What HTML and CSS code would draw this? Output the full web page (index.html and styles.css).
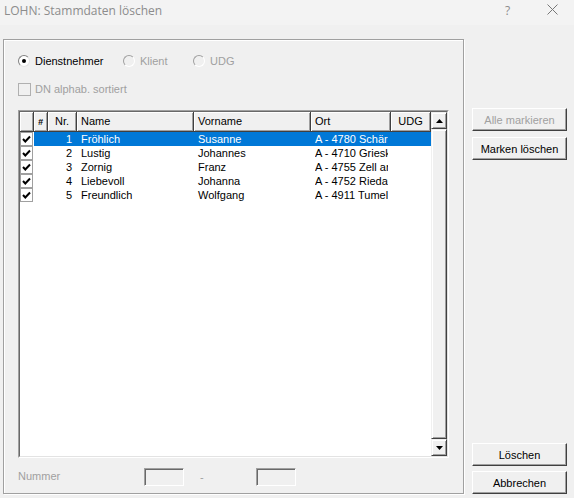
FILE: index.html
```html
<!DOCTYPE html>
<html lang="de">
<head>
    <meta charset="UTF-8">
    <title>LOHN: Stammdaten löschen</title>
    <link rel="stylesheet" href="styles.css">
</head>
<body>
    <div class="titlebar">
        <span class="title">LOHN: Stammdaten löschen</span>
        <span class="help">?</span>
        <span class="close">
            <svg width="11" height="11" viewBox="0 0 11 11"><path d="M0.5 0.5 L10.5 10.5 M10.5 0.5 L0.5 10.5" stroke="#777" stroke-width="1" fill="none"/></svg>
        </span>
    </div>

    <div class="dialog">
        <div class="group">
            <div class="radios">
                <label class="radio"><span class="radio-dot on"></span>Dienstnehmer</label>
                <label class="radio off"><span class="radio-dot"></span>Klient</label>
                <label class="radio off"><span class="radio-dot"></span>UDG</label>
            </div>

            <div class="check-row off">
                <span class="box"></span>DN alphab. sortiert
            </div>

            <div class="list">
                <div class="list-inner">
                    <div class="grid">
                        <div class="head">
                            <div class="hcell c-chk"></div>
                            <div class="hcell c-mark center"><span class="mark">#</span></div>
                            <div class="hcell c-nr center">Nr.</div>
                            <div class="hcell c-name">Name</div>
                            <div class="hcell c-vor">Vorname</div>
                            <div class="hcell c-ort">Ort</div>
                            <div class="hcell c-udg center">UDG</div>
                        </div>
                        <div class="rows">
                            <div class="row selected">
                                <div class="cell c-chk"><span class="tick"><svg width="11" height="11" viewBox="0 0 11 11"><polyline points="2,5 4.3,7.5 9,2.5" stroke="#000" stroke-width="2" fill="none"/></svg></span></div>
                                <div class="cell c-mark"></div>
                                <div class="cell c-nr num">1</div>
                                <div class="cell c-name">Fröhlich</div>
                                <div class="cell c-vor">Susanne</div>
                                <div class="cell c-ort"><span>A - 4780 Schärding</span></div>
                                <div class="cell c-udg"></div>
                            </div>
                            <div class="row">
                                <div class="cell c-chk"><span class="tick"><svg width="11" height="11" viewBox="0 0 11 11"><polyline points="2,5 4.3,7.5 9,2.5" stroke="#000" stroke-width="2" fill="none"/></svg></span></div>
                                <div class="cell c-mark"></div>
                                <div class="cell c-nr num">2</div>
                                <div class="cell c-name">Lustig</div>
                                <div class="cell c-vor">Johannes</div>
                                <div class="cell c-ort"><span>A - 4710 Grieskirchen</span></div>
                                <div class="cell c-udg"></div>
                            </div>
                            <div class="row">
                                <div class="cell c-chk"><span class="tick"><svg width="11" height="11" viewBox="0 0 11 11"><polyline points="2,5 4.3,7.5 9,2.5" stroke="#000" stroke-width="2" fill="none"/></svg></span></div>
                                <div class="cell c-mark"></div>
                                <div class="cell c-nr num">3</div>
                                <div class="cell c-name">Zornig</div>
                                <div class="cell c-vor">Franz</div>
                                <div class="cell c-ort"><span>A - 4755 Zell an der Pram</span></div>
                                <div class="cell c-udg"></div>
                            </div>
                            <div class="row">
                                <div class="cell c-chk"><span class="tick"><svg width="11" height="11" viewBox="0 0 11 11"><polyline points="2,5 4.3,7.5 9,2.5" stroke="#000" stroke-width="2" fill="none"/></svg></span></div>
                                <div class="cell c-mark"></div>
                                <div class="cell c-nr num">4</div>
                                <div class="cell c-name">Liebevoll</div>
                                <div class="cell c-vor">Johanna</div>
                                <div class="cell c-ort"><span>A - 4752 Riedau</span></div>
                                <div class="cell c-udg"></div>
                            </div>
                            <div class="row">
                                <div class="cell c-chk"><span class="tick"><svg width="11" height="11" viewBox="0 0 11 11"><polyline points="2,5 4.3,7.5 9,2.5" stroke="#000" stroke-width="2" fill="none"/></svg></span></div>
                                <div class="cell c-mark"></div>
                                <div class="cell c-nr num">5</div>
                                <div class="cell c-name">Freundlich</div>
                                <div class="cell c-vor">Wolfgang</div>
                                <div class="cell c-ort"><span>A - 4911 Tumeltsham</span></div>
                                <div class="cell c-udg"></div>
                            </div>
                        </div>
                    </div>
                    <div class="scrollbar">
                        <div class="sb-btn"><svg width="7" height="4" viewBox="0 0 7 4"><polygon points="0,4 7,4 3.5,0" fill="#000"/></svg></div>
                        <div class="sb-thumb"></div>
                        <div class="sb-btn"><svg width="7" height="4" viewBox="0 0 7 4"><polygon points="0,0 7,0 3.5,4" fill="#000"/></svg></div>
                    </div>
                </div>
            </div>

            <div class="range off">
                <span class="range-label">Nummer</span>
                <span class="edit"></span>
                <span class="dash">-</span>
                <span class="edit"></span>
            </div>
        </div>

        <div class="buttons">
            <div class="btn-group top">
                <button class="btn" disabled>Alle markieren</button>
                <button class="btn">Marken löschen</button>
            </div>
            <div class="btn-group bottom">
                <button class="btn">Löschen</button>
                <button class="btn">Abbrechen</button>
            </div>
        </div>
    </div>
</body>
</html>
```

FILE: styles.css
```css
body {
    margin: 0;
    padding: 0;
    width: 574px;
    height: 498px;
    overflow: hidden;
    background-color: #f0f0f0;
    font-family: 'Liberation Sans', Arial, sans-serif;
    font-size: 11px;
    color: #000;
}

.titlebar {
    height: 25px;
    background-color: #f3f3f3;
    display: flex;
    align-items: center;
    font-family: 'Open Sans', 'Noto Sans', sans-serif;
    font-size: 12px;
    color: #8c8c8c;
}

.title {
    padding-left: 4px;
    margin-top: -4px;
    flex: 1;
}

.help {
    margin-top: -4px;
    width: 14px;
    margin-right: 28px;
    font-size: 12px;
}

.close {
    display: flex;
    margin-top: -6px;
    margin-right: 16px;
}

.dialog {
    display: flex;
    padding-top: 14px;
    padding-left: 3px;
}

.group {
    width: 461px;
    height: 455px;
    box-sizing: border-box;
    border: 1px solid #a0a0a0;
    box-shadow: inset 1px 1px 0 #fff, 1px 1px 0 #fff;
    padding-left: 14px;
}

.off {
    color: #a0a0a0;
}

.radios {
    display: flex;
    height: 14px;
    line-height: 14px;
    margin-top: 14px;
}

.radio {
    display: flex;
    align-items: center;
    gap: 5px;
}

.radio:nth-child(1) {
    width: 105px;
}

.radio:nth-child(2) {
    width: 70px;
}

.radio-dot {
    width: 10px;
    height: 10px;
    border-radius: 50%;
    border: 1px solid;
    border-color: #a0a0a0 #fff #fff #a0a0a0;
    background-color: #f0f0f0;
    position: relative;
}

.radio-dot.on {
    background-color: #fff;
    border-color: #808080 #e3e3e3 #e3e3e3 #808080;
}

.radio-dot.on::after {
    content: "";
    position: absolute;
    left: 3px;
    top: 3px;
    width: 4px;
    height: 4px;
    border-radius: 50%;
    background-color: #000;
}

.check-row {
    display: flex;
    align-items: center;
    gap: 4px;
    height: 14px;
    margin-top: 14px;
}

.box {
    width: 11px;
    height: 11px;
    border: 1px solid #b0b0b0;
    background-color: #f0f0f0;
}

.list {
    margin-top: 14px;
    width: 431px;
    height: 348px;
    box-sizing: border-box;
    border: 1px solid;
    border-color: #a0a0a0 #fff #fff #a0a0a0;
}

.list-inner {
    height: 100%;
    box-sizing: border-box;
    border: 1px solid;
    border-color: #696969 #e3e3e3 #e3e3e3 #696969;
    display: flex;
    background-color: #fff;
}

.grid {
    width: 411px;
}

.head {
    display: flex;
    height: 20px;
}

.hcell {
    box-sizing: border-box;
    height: 20px;
    line-height: 19px;
    background-color: #f0f0f0;
    border-right: 1px solid #404040;
    border-bottom: 1px solid #404040;
    box-shadow: inset 1px 1px 0 #fff, inset -1px -1px 0 #a0a0a0;
    padding-left: 4px;
    white-space: nowrap;
}

.hcell.center {
    text-align: center;
    padding-left: 0;
}

.mark {
    font-weight: bold;
    font-style: italic;
    font-size: 9px;
}

.c-chk { width: 14px; }
.c-mark { width: 14px; }
.c-nr { width: 29px; }
.c-name { width: 117px; }
.c-vor { width: 117px; }
.c-ort { width: 80px; }
.c-udg { width: 40px; }

.row {
    display: flex;
    height: 14px;
    line-height: 14px;
}

.cell {
    box-sizing: border-box;
    padding-left: 4px;
    white-space: nowrap;
    overflow: hidden;
}

.cell.c-chk {
    padding-left: 0;
    display: flex;
}

.cell.num {
    text-align: right;
    padding-left: 0;
    padding-right: 5px;
}

.cell.c-ort span {
    display: block;
    width: 73px;
    overflow: hidden;
}

.row.selected .cell:not(.c-chk) {
    background-color: #0078d7;
    color: #fff;
}

.tick {
    width: 11px;
    height: 12px;
    border: 1px solid #a0a0a0;
    background-color: #fff;
    display: flex;
    align-items: center;
    justify-content: center;
}

.scrollbar {
    width: 16px;
    display: flex;
    flex-direction: column;
    background-color: #f0f0f0;
}

.sb-btn,
.sb-thumb {
    box-sizing: border-box;
    border: 1px solid;
    border-color: #f0f0f0 #404040 #404040 #f0f0f0;
    box-shadow: inset 1px 1px 0 #fff, inset -1px -1px 0 #a0a0a0;
    background-color: #f0f0f0;
}

.sb-btn {
    height: 17px;
    display: flex;
    align-items: center;
    justify-content: center;
}

.sb-thumb {
    flex: 1;
}

.range {
    display: flex;
    align-items: center;
    margin-top: 10px;
    height: 18px;
}

.range-label {
    width: 126px;
    margin-top: -3px;
}

.edit {
    width: 40px;
    height: 18px;
    box-sizing: border-box;
    border: 1px solid;
    border-color: #a0a0a0 #fff #fff #a0a0a0;
    box-shadow: inset 1px 1px 0 #696969;
}

.dash {
    width: 72px;
    padding-left: 16px;
    box-sizing: border-box;
}

.buttons {
    margin-left: 8px;
    width: 95px;
    height: 455px;
    display: flex;
    flex-direction: column;
    justify-content: space-between;
}

.btn-group {
    display: flex;
    flex-direction: column;
}

.btn-group.top {
    margin-top: 69px;
    gap: 6px;
}

.btn-group.bottom {
    gap: 5px;
    margin-bottom: 0;
}

.btn {
    height: 23px;
    width: 95px;
    margin: 0;
    padding: 0;
    font-family: 'Liberation Sans', Arial, sans-serif;
    font-size: 11px;
    color: #000;
    background-color: #f0f0f0;
    border: 1px solid;
    border-color: #fff #404040 #404040 #fff;
    box-shadow: inset -1px -1px 0 #a0a0a0;
}

.btn:disabled {
    color: #a0a0a0;
}
```
